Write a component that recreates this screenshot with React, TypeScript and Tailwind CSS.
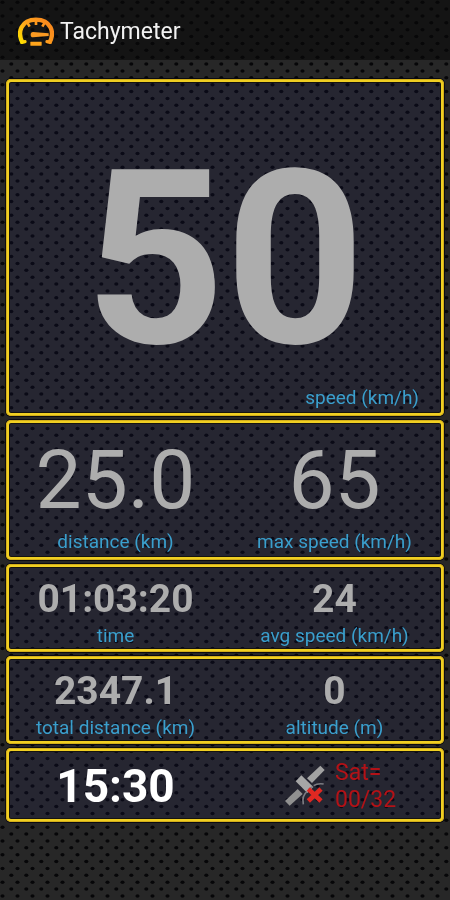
import React from "react";

const PANEL =
  "rounded-[5px] bg-[#20206a]/15 shadow-[inset_0_0_0_1px_#d2ae1a,inset_0_0_0_3px_#f0cf22,inset_0_0_0_4px_#16140f,0_0_0_1px_#0b0b12]";

function DotGrid() {
  const rowsA = [2.25, 16, 29.75, 43.5];
  const rowsB = [9, 22.75, 36.5, 50.25];
  return (
    <svg className="fixed inset-0 -z-10 h-full w-full" aria-hidden="true">
      <defs>
        <pattern id="dots" width="15" height="55" patternUnits="userSpaceOnUse">
          {rowsA.map((y) => (
            <ellipse key={y} cx="2.5" cy={y} rx="2.1" ry="1.8" fill="#060608" />
          ))}
          {rowsB.map((y) => (
            <ellipse key={y} cx="11.3" cy={y} rx="2.1" ry="1.8" fill="#060608" />
          ))}
        </pattern>
      </defs>
      <rect width="100%" height="100%" fill="#272727" />
      <rect width="100%" height="100%" fill="url(#dots)" />
    </svg>
  );
}

function GaugeIcon() {
  return (
    <svg width="36" height="30" viewBox="0 0 108 90" fill="none" aria-hidden="true">
      <defs>
        <linearGradient id="amber" gradientUnits="userSpaceOnUse" x1="4" y1="70" x2="84" y2="10">
          <stop offset="0" stopColor="#ffe000" />
          <stop offset="0.45" stopColor="#ffa51c" />
          <stop offset="1" stopColor="#f98a1d" />
        </linearGradient>
      </defs>
      <path
        d="M14 78 C-4 46 10 8 54 8 C98 8 112 46 94 78"
        stroke="url(#amber)"
        strokeWidth="13"
        strokeLinejoin="round"
      />
      <path d="M12 76 L21 74 M96 76 L87 74" stroke="url(#amber)" strokeWidth="10" strokeLinecap="round" />
      <path d="M54 8 V24 M28 17 L35 29 M80 17 L73 29" stroke="url(#amber)" strokeWidth="8" />
      <path d="M45 45 L92 49 V57 L45 61 Q38 61 38 53 Q38 45 45 45 Z" fill="#fb9a22" />
      <rect x="37" y="74" width="34" height="12" rx="1" fill="#ffa51c" />
    </svg>
  );
}

function SatelliteIcon() {
  return (
    <svg width="40" height="42" viewBox="0 0 120 126" aria-hidden="true">
      <path d="M0 108 L38 72 L53 87 L14 122 Z" fill="#909090" />
      <path d="M66 40 L106 2 L119 15 L81 54 Z" fill="#a2a2a2" />
      <path d="M32 49 L49 31 L85 66 L67 84 Z" fill="#a6a6a6" />
      <path
        d="M55 118 Q50 92 66 80 M86 62 Q98 54 116 57 M70 74 L84 64"
        fill="none"
        stroke="#7c7c82"
        strokeWidth="5"
      />
      <path d="M70 72 L108 108 M108 72 L70 108" stroke="#e02822" strokeWidth="14" />
    </svg>
  );
}

function Caption({ children }: { children: React.ReactNode }) {
  return <div className="text-[19px] leading-6 text-[#3a9fcd]">{children}</div>;
}

function Reading({ value, label }: { value: string; label: string }) {
  return (
    <div className="flex flex-col items-center gap-[3px]">
      <div className="text-[39px] leading-[44px] font-bold">{value}</div>
      <Caption>{label}</Caption>
    </div>
  );
}

function LargeReading({ value, label }: { value: string; label: string }) {
  return (
    <div className="flex flex-col items-center gap-2">
      <div className="text-[82px] leading-[84px]">{value}</div>
      <Caption>{label}</Caption>
    </div>
  );
}

export default function App() {
  return (
    <div className="relative isolate min-h-screen font-['Roboto',sans-serif] text-[#adadad]">
      <DotGrid />
      <header className="flex h-[60px] items-center gap-[6px] bg-[#080808]/60 px-[18px] pt-[3px]">
        <GaugeIcon />
        <h1 className="text-[23px] leading-8 text-[#f2f2f2]">Tachymeter</h1>
      </header>
      <main className="flex flex-col gap-1 px-[6px] pt-[19px]">
        <section className={`${PANEL} pt-[61px] pb-[6px]`}>
          <div className="text-center text-[244px] leading-[240px] font-bold">50</div>
          <div className="pt-[6px] pr-[25px] text-right">
            <Caption>speed (km/h)</Caption>
          </div>
        </section>
        <section className={`${PANEL} grid grid-cols-2 pt-[18px] pb-[6px]`}>
          <LargeReading value="25.0" label="distance (km)" />
          <LargeReading value="65" label="max speed (km/h)" />
        </section>
        <section className={`${PANEL} grid grid-cols-2 pt-[13px] pb-1`}>
          <Reading value="01:03:20" label="time" />
          <Reading value="24" label="avg speed (km/h)" />
        </section>
        <section className={`${PANEL} grid grid-cols-2 pt-[13px] pb-1`}>
          <Reading value="2347.1" label="total distance (km)" />
          <Reading value="0" label="altitude (m)" />
        </section>
        <section className={`${PANEL} grid grid-cols-2 pt-[11px] pb-[9px]`}>
          <div className="text-center text-[46px] leading-[54px] font-bold text-white">15:30</div>
          <div className="flex items-center gap-[10px] pl-[60px]">
            <SatelliteIcon />
            <div className="text-[23px] leading-[27px] text-[#b31217]">
              Sat=
              <br />
              00/32
            </div>
          </div>
        </section>
      </main>
    </div>
  );
}
